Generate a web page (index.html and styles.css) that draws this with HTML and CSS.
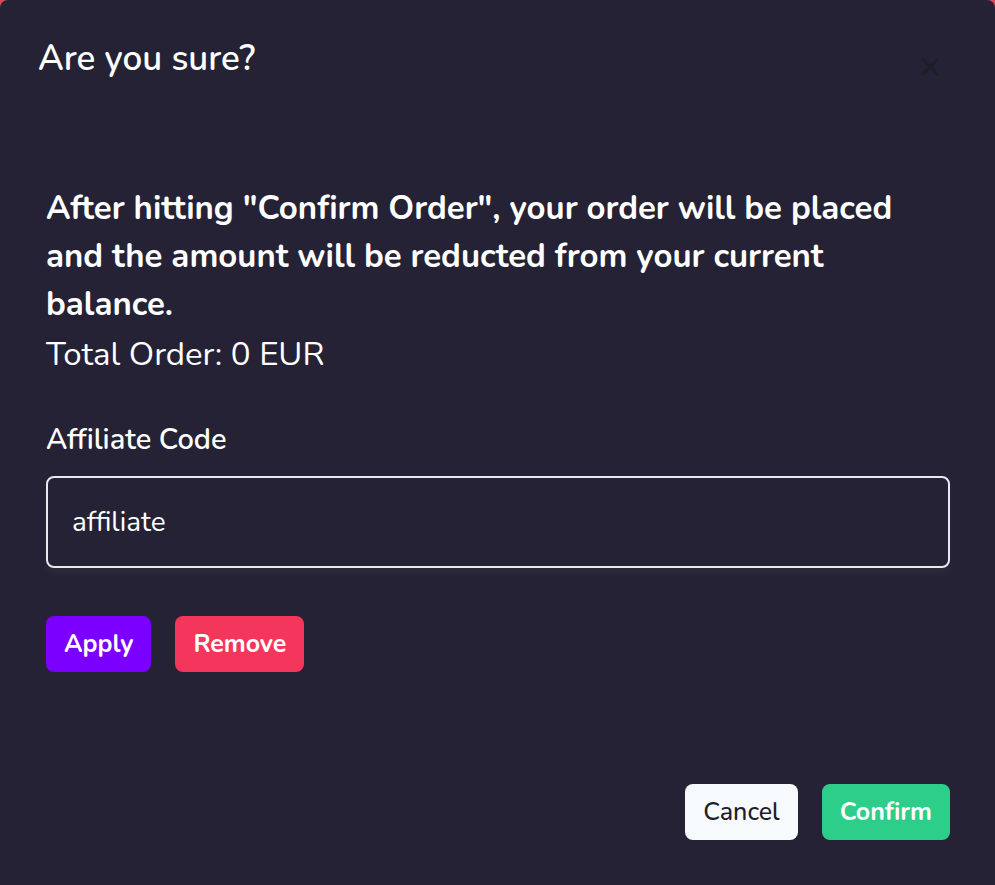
FILE: index.html
```html
<!DOCTYPE html>
<html lang="en">
<head>
<meta charset="utf-8">
<meta name="viewport" content="width=device-width, initial-scale=1">
<title>Are you sure?</title>
<link rel="stylesheet" href="styles.css">
</head>
<body>
<form class="modal" role="dialog" aria-labelledby="modal-title">
  <header class="modal-header">
    <h1 class="modal-title" id="modal-title">Are you sure?</h1>
    <button class="close" type="button" aria-label="Close">
      <svg viewBox="0 0 20 20" aria-hidden="true"><path d="M2 2 L18 18 M18 2 L2 18"/></svg>
    </button>
  </header>
  <main class="modal-body">
    <p class="notice">After hitting "Confirm Order", your order will be placed and the amount will be reducted from your current balance.</p>
    <p class="total">Total Order: 0 EUR</p>
    <label class="label" for="code">Affiliate Code</label>
    <input class="field" id="code" type="text" value="affiliate">
    <div class="actions">
      <button class="btn btn-apply" type="button">Apply</button>
      <button class="btn btn-remove" type="button">Remove</button>
    </div>
  </main>
  <footer class="modal-footer">
    <button class="btn btn-cancel" type="button">Cancel</button>
    <button class="btn btn-confirm" type="submit">Confirm</button>
  </footer>
</form>
</body>
</html>
```
FILE: styles.css
```css
* { box-sizing: border-box; }
body {
  margin: 0;
  background: #d84a58;
  color: #fff;
  font-family: Nunito, "Open Sans", "Noto Sans", sans-serif;
  font-variant-ligatures: none;
}
h1, p { margin: 0; }
button, input { font: inherit; }
.modal {
  min-height: 100vh;
  display: flex;
  flex-direction: column;
  background: #242234;
  border-radius: 8px 8px 0 0;
}
.modal-header {
  display: flex;
  justify-content: space-between;
  align-items: flex-start;
  padding: 33px 47px 0 38px;
}
.modal-title { font-size: 35px; line-height: 52px; font-weight: 600; }
.close {
  width: 36px;
  height: 36px;
  margin-top: 16px;
  padding: 8px;
  border: 0;
  background: none;
}
.close svg { display: block; width: 20px; height: 20px; fill: none; stroke: #1b2028; stroke-width: 3; }
.modal-body { padding: 100px 45px 0 46px; }
.notice { font-size: 33px; line-height: 48px; font-weight: 700; }
.total { font-size: 33px; line-height: 48px; margin-top: 2px; }
.label { display: block; margin-top: 40px; font-size: 29px; line-height: 42px; font-weight: 600; }
.field {
  display: block;
  width: 100%;
  height: 92px;
  margin-top: 15px;
  padding: 0 24px;
  border: 2px solid #e8e8ef;
  border-radius: 8px;
  background: transparent;
  box-shadow: 0 6px 6px rgba(255, 255, 255, 0.03);
  color: #fff;
  font-size: 28px;
  font-variant-ligatures: normal;
}
.actions { display: flex; gap: 24px; margin-top: 48px; }
.btn {
  height: 56px;
  padding: 0 18px;
  border: 0;
  border-radius: 8px;
  color: #fff;
  font-size: 25px;
  font-weight: 700;
}
.btn-apply { background: #7b00ff; }
.btn-remove { background: #f5365c; }
.btn-cancel { background: #f7fafc; color: #1d1c2b; font-weight: 500; }
.btn-confirm { background: #2dce89; }
.modal-footer {
  display: flex;
  justify-content: flex-end;
  gap: 24px;
  margin-top: auto;
  padding: 0 45px 45px;
}
```
